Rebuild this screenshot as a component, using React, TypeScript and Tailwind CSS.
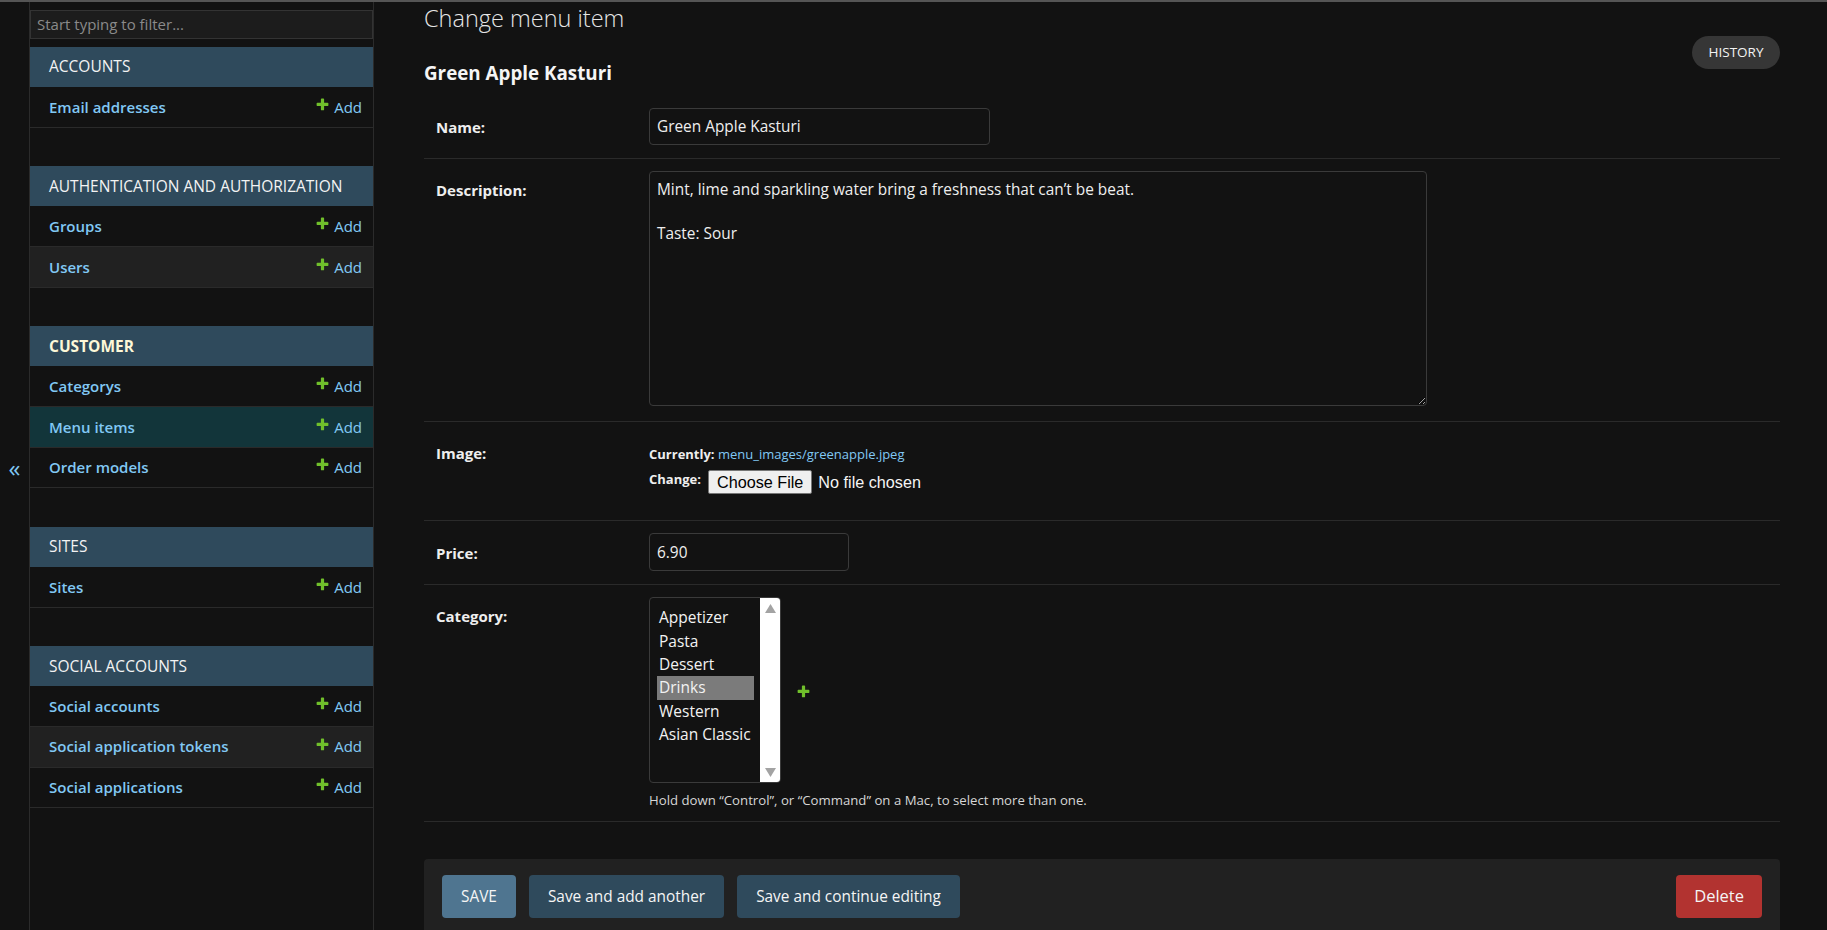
import * as React from "react";

type Section = {
  title: string;
  current?: boolean;
  models: { name: string; alt?: boolean; selected?: boolean }[];
};

const sections: Section[] = [
  { title: "Accounts", models: [{ name: "Email addresses" }] },
  {
    title: "Authentication and Authorization",
    models: [{ name: "Groups" }, { name: "Users", alt: true }],
  },
  {
    title: "Customer",
    current: true,
    models: [
      { name: "Categorys" },
      { name: "Menu items", selected: true },
      { name: "Order models" },
    ],
  },
  { title: "Sites", models: [{ name: "Sites" }] },
  {
    title: "Social Accounts",
    models: [
      { name: "Social accounts" },
      { name: "Social application tokens", alt: true },
      { name: "Social applications" },
    ],
  },
];

const categories = ["Appetizer", "Pasta", "Dessert", "Drinks", "Western", "Asian Classic"];

function AddIcon({ className }: { className?: string }) {
  return (
    <svg viewBox="0 0 1792 1792" className={className} aria-hidden="true">
      <path
        fill="#70bf2b"
        d="M1600 796v192q0 40-28 68t-68 28h-416v416q0 40-28 68t-68 28h-192q-40 0-68-28t-28-68v-416h-416q-40 0-68-28t-28-68v-192q0-40 28-68t68-28h416v-416q0-40 28-68t68-28h192q40 0 68 28t28 68v416h416q40 0 68 28t28 68z"
      />
    </svg>
  );
}

function NavSidebar() {
  return (
    <aside className="w-[344px] shrink-0 border-r border-[#2b2b2b] pt-[8px]">
      <div className="h-[29px] border border-[#333] bg-[#1c1c1c] px-[6px] flex items-center text-[15px] text-[#8a8a8a]">
        Start typing to filter...
      </div>
      <div className="mt-[8px] flex flex-col gap-[38.8px]">
        {sections.map((s) => (
          <div key={s.title}>
            <div
              className={`h-[40px] bg-[#2f4a5c] px-[19px] flex items-center uppercase text-[15.5px] ${
                s.current ? "font-bold text-[#fdf8d8]" : "text-[#f3f3f3]"
              }`}
            >
              {s.title}
            </div>
            {s.models.map((m) => (
              <div
                key={m.name}
                className={`h-[40.6px] border-b border-[#2a2a2a] pl-[19px] pr-[11px] flex items-center justify-between ${
                  m.selected ? "bg-[#12353a]" : m.alt ? "bg-[#212121]" : ""
                }`}
              >
                <span className="text-[15px] font-semibold text-[#81c8f4]">{m.name}</span>
                <span className="flex items-center text-[15px] text-[#81c8f4]">
                  <AddIcon className="w-[15px] h-[15px] -mt-[5px] mr-[4px]" />
                  Add
                </span>
              </div>
            ))}
          </div>
        ))}
      </div>
    </aside>
  );
}

function Label({ children, pt = "pt-[9px]" }: { children: React.ReactNode; pt?: string }) {
  return (
    <div className={`w-[213px] shrink-0 ${pt} leading-[20px] text-[15px] font-bold text-[#eeeeee]`}>
      {children}
    </div>
  );
}

function CategorySelect() {
  return (
    <div className="flex items-center">
      <div className="w-[132px] h-[186px] border border-[#3a3a3a] rounded-[4px] flex overflow-hidden">
        <div className="flex-1 pt-[8px] pl-[7px] pr-[6px]">
          {categories.map((c) => (
            <div
              key={c}
              className={`h-[23.4px] leading-[23.4px] px-[2px] text-[15.5px] text-[#f2f2f2] whitespace-nowrap ${
                c === "Drinks" ? "bg-[#7b7b7b]" : ""
              }`}
            >
              {c}
            </div>
          ))}
        </div>
        <div className="w-[20px] bg-white flex flex-col items-center justify-between pt-[6px] pb-[5px]">
          <svg viewBox="0 0 10 8" className="w-[11px] h-[9px]">
            <path d="M5 0 L10 8 L0 8 Z" fill="#a3a3a3" />
          </svg>
          <svg viewBox="0 0 10 8" className="w-[11px] h-[9px]">
            <path d="M0 0 L10 0 L5 8 Z" fill="#a3a3a3" />
          </svg>
        </div>
      </div>
      <AddIcon className="w-[15px] h-[15px] ml-[15px] mt-[3px]" />
    </div>
  );
}

export default function App() {
  return (
    <div
      className="h-[930px] w-full overflow-hidden bg-[#121212] text-[#eeeeee] border-t-2 border-[#555]"
      style={{ fontFamily: '"Open Sans", "Noto Sans", sans-serif' }}
    >
      <div className="flex h-full">
        <div className="w-[30px] shrink-0 border-r border-[#2b2b2b] flex items-center justify-center pt-[4px]">
          <span className="text-[24px] leading-none text-[#81c8f4]">«</span>
        </div>
        <NavSidebar />
        <main className="flex-1 min-w-0 pl-[50px] pr-[47px]">
          <div className="flex justify-between items-start">
            <div>
              <h1 className="h-[36px] leading-[32px] text-[23.5px] font-light text-[#e6e6e6]">
                Change menu item
              </h1>
              <h2 className="mt-[23px] leading-[24px] text-[18.8px] font-bold text-[#f5f5f5]">
                Green Apple Kasturi
              </h2>
            </div>
            <div className="mt-[34px] h-[33px] w-[88px] rounded-full bg-[#363636] flex items-center justify-center text-[13.5px] text-[#f3f3f3] uppercase">
              History
            </div>
          </div>

          <div className="mt-[11px]">
            <div className="flex pl-[12px] pt-[12px] pb-[13px] border-b border-[#2a2a2a]">
              <Label>Name:</Label>
              <div className="w-[341px] h-[37px] border border-[#3a3a3a] rounded-[4px] px-[7px] flex items-center text-[15.4px]">
                Green Apple Kasturi
              </div>
            </div>

            <div className="flex pl-[12px] pt-[12px] pb-[15px] border-b border-[#2a2a2a]">
              <Label>Description:</Label>
              <textarea
                readOnly
                defaultValue={
                  "Mint, lime and sparkling water bring a freshness that can\u2019t be beat.\n\nTaste: Sour"
                }
                className="block w-[778px] h-[235px] border border-[#3a3a3a] rounded-[4px] px-[7px] py-[7px] text-[15.4px] leading-[22px] text-[#eeeeee] bg-[#121212] outline-none"
              />
            </div>

            <div className="flex pl-[12px] pt-[12px] pb-[26px] border-b border-[#2a2a2a]">
              <Label>Image:</Label>
              <div className="pt-[10px]">
                <div className="leading-[20px] text-[13px]">
                  <span className="font-bold text-[#eeeeee]">Currently:</span>{" "}
                  <span className="text-[#81c8f4]">menu_images/greenapple.jpeg</span>
                </div>
                <div className="mt-[6px] flex items-center">
                  <span className="text-[13px] font-bold mr-[7px] -mt-[4px]">Change:</span>
                  <div
                    className="flex items-center"
                    style={{ fontFamily: '"Liberation Sans", Arial, sans-serif' }}
                  >
                    <span className="h-[24px] px-[8px] bg-[#efefef] border border-[#767676] rounded-[2px] text-[16.2px] text-black flex items-center">
                      Choose File
                    </span>
                    <span className="ml-[6px] text-[16.2px] text-[#f5f5f5]">No file chosen</span>
                  </div>
                </div>
              </div>
            </div>

            <div className="flex pl-[12px] pt-[12px] pb-[13px] border-b border-[#2a2a2a]">
              <Label pt="pt-[10px]">Price:</Label>
              <div className="w-[200px] h-[38px] border border-[#3a3a3a] rounded-[4px] px-[7px] flex items-center text-[15.4px]">
                6.90
              </div>
            </div>

            <div className="flex pl-[12px] pt-[12px] pb-[11px] border-b border-[#2a2a2a]">
              <Label>Category:</Label>
              <div>
                <CategorySelect />
                <div className="mt-[7px] text-[13.2px] leading-[20px] text-[#d6d6d6]">
                  Hold down “Control”, or “Command” on a Mac, to select more than one.
                </div>
              </div>
            </div>
          </div>

          <div className="mt-[37px] h-[120px] rounded-[4px] bg-[#212121] px-[18px] pt-[16px] flex justify-between items-start">
            <div className="flex gap-[13px]">
              <div className="h-[43px] px-[19px] rounded-[4px] bg-[#4f7590] flex items-center text-[15.4px] text-[#f5f5f5]">
                SAVE
              </div>
              <div className="h-[43px] px-[19px] rounded-[4px] bg-[#2f4a5c] flex items-center text-[15.4px] text-[#f5f5f5]">
                Save and add another
              </div>
              <div className="h-[43px] px-[19px] rounded-[4px] bg-[#2f4a5c] flex items-center text-[15.4px] text-[#f5f5f5]">
                Save and continue editing
              </div>
            </div>
            <div className="h-[43px] px-[18px] rounded-[4px] bg-[#b23330] flex items-center text-[16.5px] text-[#f5f5f5]">
              Delete
            </div>
          </div>
        </main>
      </div>
    </div>
  );
}
